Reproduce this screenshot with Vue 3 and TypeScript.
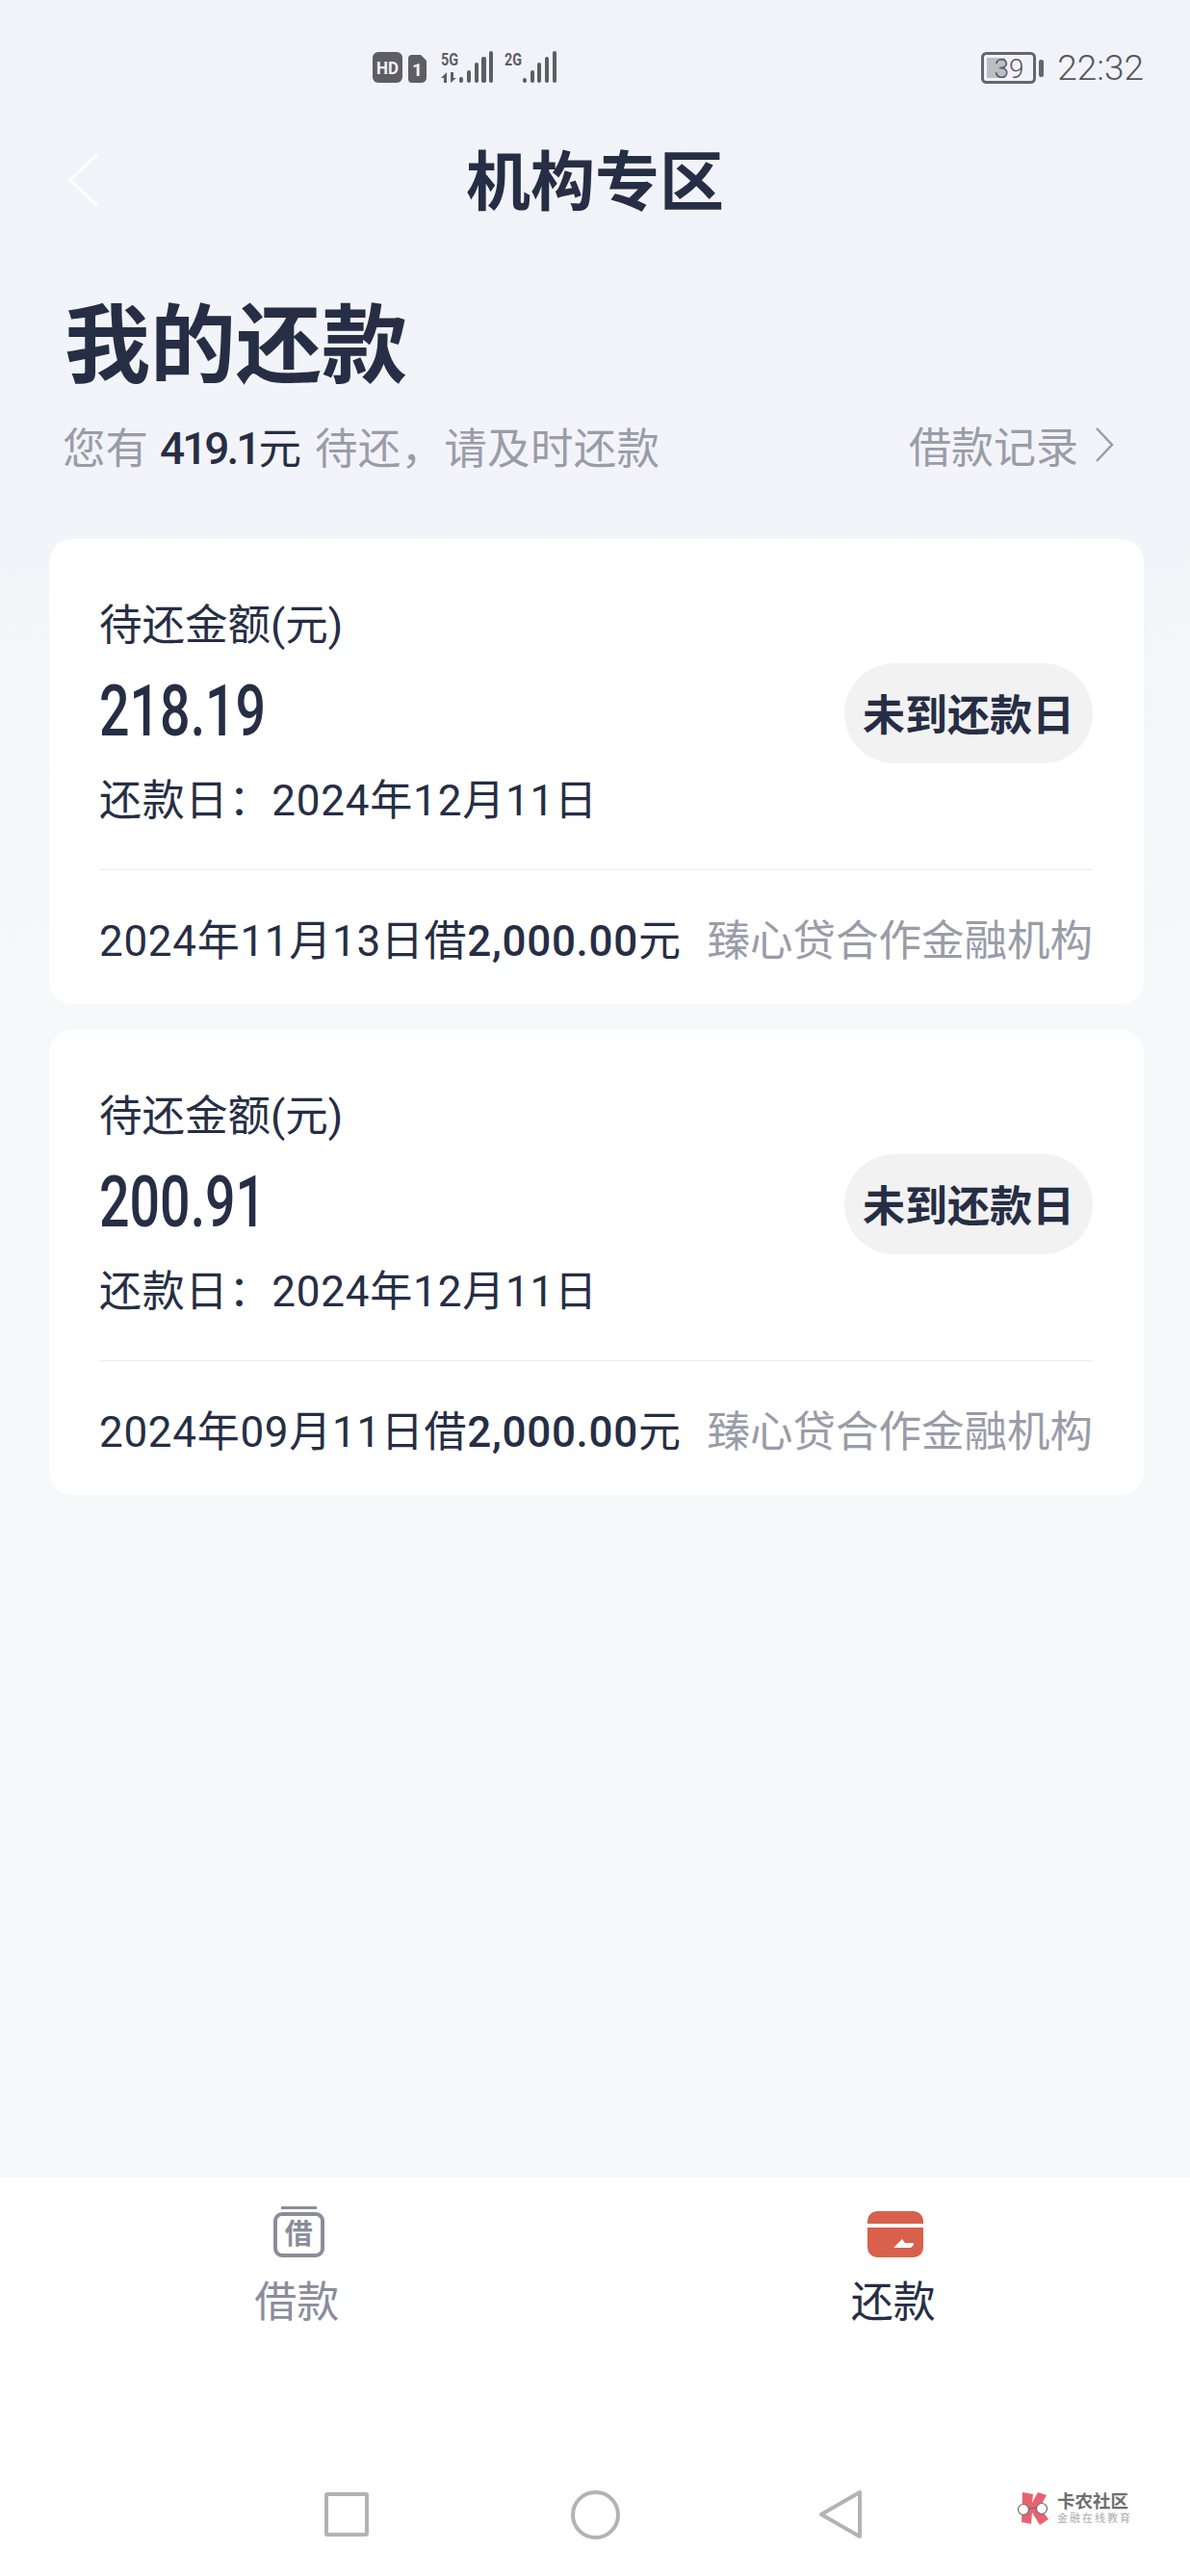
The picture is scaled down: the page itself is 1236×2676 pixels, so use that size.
<template>
  <div class="page">
    <div class="status-bar">
      <svg class="status-left" width="200" height="40" viewBox="0 0 200 40">
        <rect x="7" y="4" width="31" height="32" rx="6" fill="#5d5e63" />
        <text x="22.500" y="27" class="st-hd" text-anchor="middle" textLength="23" lengthAdjust="spacingAndGlyphs">HD</text>
        <path d="M48 7h9l6 6v18a5 5 0 0 1-5 5h-10a4 4 0 0 1-4-4v-21a4 4 0 0 1 4-4z" fill="#5d5e63" />
        <text x="53.500" y="29" class="st-hd" text-anchor="middle">1</text>
        <text x="87" y="18" class="st-g" text-anchor="middle" textLength="18" lengthAdjust="spacingAndGlyphs">5G</text>
        <path d="M84 25l-6 6h3v5h3zM88 25h3v6h3l-6 5z" fill="#5d5e63" />
        <g fill="#5d5e63">
          <rect x="97" y="30" width="4" height="6" rx="2" />
          <rect x="105" y="23" width="4" height="13" rx="2" />
          <rect x="113" y="15" width="4" height="21" rx="2" />
          <rect x="120" y="9" width="5" height="27" rx="2" />
          <rect x="128" y="3" width="4" height="33" rx="2" />
          <rect x="163" y="31" width="4" height="5" rx="2" />
          <rect x="171" y="23" width="4" height="13" rx="2" />
          <rect x="178" y="15" width="4" height="21" rx="2" />
          <rect x="186" y="9" width="4" height="27" rx="2" />
          <rect x="194" y="3" width="4" height="33" rx="2" />
        </g>
        <text x="153" y="18" class="st-g" text-anchor="middle" textLength="18" lengthAdjust="spacingAndGlyphs">2G</text>
      </svg>
      <div class="status-right">
        <svg width="66" height="36" viewBox="0 0 66 36">
          <rect x="1.500" y="2.500" width="54" height="30" rx="4" fill="none" stroke="#65676c" stroke-width="3" />
          <rect x="6" y="7" width="19" height="21" fill="#bdbec2" />
          <rect x="60" y="9" width="5" height="18" rx="2" fill="#65676c" />
          <text x="29" y="28" class="st-batt" text-anchor="middle">39</text>
        </svg>
        <span class="time">22:32</span>
      </div>
    </div>

    <div class="nav">
      <svg class="back" width="34" height="58" viewBox="0 0 34 58">
        <path d="M31 2L3 29l28 27" fill="none" stroke="#ffffff" stroke-width="3" />
      </svg>
      <div class="nav-title">机构专区</div>
    </div>

    <div class="head">
      <h1 class="head-title">我的还款</h1>
      <div class="head-sub">
        <div class="sub-left">
          <span>您有</span><b class="sub-num">419.1</b><b class="sub-unit">元</b><span class="sub-rest">待还&#xFF0C;请及时还款</span>
        </div>
        <div class="sub-right">
          借款记录
          <svg width="20" height="36" viewBox="0 0 20 36">
            <path d="M2 1l16 17L2 35" fill="none" stroke="#9a9ca8" stroke-width="2.500" />
          </svg>
        </div>
      </div>
    </div>

    <div class="cards">
      <div v-for="bill in bills" :key="bill.amount" class="card">
        <div class="card-main">
          <div class="card-info">
            <div class="label">待还金额(元)</div>
            <div class="amount"><span>{{ bill.amount }}</span></div>
            <div class="label due">还款日&#xFF1A;{{ bill.due }}</div>
          </div>
          <div class="pill">未到还款日</div>
        </div>
        <div class="card-foot">
          <div class="foot-left">{{ bill.borrowed }}借<b>2,000.00</b>元</div>
          <div class="foot-right">臻心贷合作金融机构</div>
        </div>
      </div>
    </div>

    <div class="bottom">
      <div class="tabs">
        <div class="tab">
          <div class="tab-icon">
            <span class="jar-lid"></span>
            <span class="jar">借</span>
          </div>
          <span class="tab-label">借款</span>
        </div>
        <div class="tab active">
          <div class="tab-icon">
            <svg width="58" height="48" viewBox="0 0 58 48">
              <path d="M10 0h38a10 10 0 0 1 10 10v3H0v-3A10 10 0 0 1 10 0zM0 17h58v21a10 10 0 0 1-10 10H10A10 10 0 0 1 0 38z" fill="#d9604c" />
              <path d="M27 38l7-7 2-2 3 4h9v2l-3 3z" fill="#ffffff" />
            </svg>
          </div>
          <span class="tab-label">还款</span>
        </div>
      </div>
      <div class="sys-nav">
        <span class="sys-square"></span>
        <span class="sys-circle"></span>
        <svg width="46" height="52" viewBox="0 0 46 52">
          <path d="M43 3v46L3 26z" fill="none" stroke="#b3b3b3" stroke-width="4" stroke-linejoin="round" />
        </svg>
      </div>
      <div class="watermark">
        <svg width="36" height="36" viewBox="0 0 36 36">
          <path d="M6 1l11 2-1 9 6-11 9 3-7 13 9 12-9 6-8-13-1 12-10-2z" fill="#e8636f" />
          <circle cx="7" cy="19" r="5.500" fill="#fff" stroke="#6b6b6b" stroke-width="1.200" />
          <circle cx="26" cy="18" r="5.500" fill="#fff" stroke="#6b6b6b" stroke-width="1.200" />
          <path d="M12 18l9-1" stroke="#6b6b6b" stroke-width="1.200" />
        </svg>
        <div class="wm-text">
          <div class="wm-name">卡农社区</div>
          <div class="wm-sub">金融在线教育</div>
        </div>
      </div>
    </div>
  </div>
</template>

<script setup lang="ts">
interface Bill {
  amount: string
  due: string
  borrowed: string
}

const bills: Bill[] = [
  { amount: '218.19', due: '2024年12月11日', borrowed: '2024年11月13日' },
  { amount: '200.91', due: '2024年12月11日', borrowed: '2024年09月11日' }
]
</script>

<style>
html,
body {
  margin: 0;
  background: #f6f7fa;
}
</style>

<style scoped>
.page {
  position: relative;
  width: 1236px;
  height: 2676px;
  display: flex;
  flex-direction: column;
  overflow: hidden;
  background: linear-gradient(#f2f3f9, #f3f4f9 520px, #f7f8fa 1000px);
  font-family: Roboto, "Noto Sans CJK SC", sans-serif;
  color: #262e45;
}

.status-bar {
  height: 133px;
  flex: none;
  box-sizing: border-box;
  padding: 50px 48px 0 380px;
  display: flex;
  justify-content: space-between;
  align-items: flex-start;
}

.st-hd {
  font: 700 19px Roboto, sans-serif;
  fill: #f2f3f9;
}

.st-g {
  font: 700 18px Roboto, sans-serif;
  fill: #5d5e63;
}

.st-batt {
  font: 300 28px Roboto, sans-serif;
  fill: #55575c;
}

.status-right {
  display: flex;
  align-items: center;
  gap: 13px;
  margin-top: 1px;
}

.time {
  font-size: 37px;
  line-height: 40px;
  font-weight: 300;
  color: #55575c;
}

.nav {
  position: relative;
  height: 114px;
  flex: none;
  display: flex;
  align-items: center;
  justify-content: center;
}

.back {
  position: absolute;
  left: 70px;
  top: 25px;
}

.nav-title {
  font-size: 67px;
  line-height: 114px;
  font-weight: 700;
}

.head {
  flex: none;
  padding: 0 48px 0 65px;
}

.head-title {
  margin: 58px 0 0 2px;
  font-size: 89px;
  line-height: 110px;
  font-weight: 700;
}

.head-sub {
  margin-top: 17px;
  display: flex;
  justify-content: space-between;
  align-items: center;
  height: 60px;
  font-size: 44.500px;
  color: #9a9ca8;
}

.sub-num {
  margin-left: 12px;
  font-weight: 500;
  font-size: 46px;
  letter-spacing: -3px;
  color: #262e45;
}

.sub-unit {
  font-weight: 400;
  color: #262e45;
}

.sub-rest {
  margin-left: 14px;
  letter-spacing: 0.300px;
}

.sub-right {
  display: flex;
  align-items: center;
  gap: 17px;
  margin-right: 31px;
  font-size: 44px;
}

.cards {
  flex: none;
  margin: 68px 48px 0 51px;
  display: flex;
  flex-direction: column;
  gap: 27px;
}

.card {
  height: 483px;
  box-sizing: border-box;
  padding: 0 53px 0 52px;
  background: #fff;
  border-radius: 24px;
}

.card-main {
  height: 344px;
  box-sizing: border-box;
  display: flex;
  justify-content: space-between;
  align-items: flex-start;
  border-bottom: 1px solid #eceded;
}

.card-info {
  padding-top: 60px;
}

.label {
  font-size: 44.500px;
  line-height: 60px;
  color: #262e45;
}

.amount {
  height: 98px;
  margin-top: 13px;
  line-height: 92px;
  font-size: 74px;
  font-weight: 500;
}

.amount span {
  display: inline-block;
  transform: scaleX(0.75);
  transform-origin: left center;
}

.due {
  margin-top: 11px;
  font-size: 44px;
  letter-spacing: 0.800px;
}

.pill {
  width: 258px;
  height: 104px;
  margin-top: 129px;
  border-radius: 52px;
  background: #f2f2f2;
  font-size: 44px;
  font-weight: 700;
  line-height: 110px;
  text-align: center;
}

.card-foot {
  height: 139px;
  display: flex;
  justify-content: space-between;
  align-items: center;
  font-size: 44px;
}

.foot-left {
  letter-spacing: 0.700px;
}

.foot-left b {
  font-weight: 500;
}

.foot-right {
  font-size: 44.500px;
  color: #9a9ca8;
}

.bottom {
  margin-top: auto;
  height: 414px;
  flex: none;
  display: flex;
  flex-direction: column;
  background: #fff;
}

.tabs {
  height: 322px;
  display: flex;
  align-items: flex-start;
}

.tab {
  flex: 1;
  padding-top: 27px;
  display: flex;
  flex-direction: column;
  align-items: center;
  color: #8b8d9b;
}

.tab.active {
  color: #262e45;
  padding-left: 3px;
}

.tab-icon {
  height: 56px;
  margin-left: 4px;
  display: flex;
  flex-direction: column;
  align-items: center;
  justify-content: flex-end;
  padding-bottom: 2px;
}

.jar-lid {
  width: 37px;
  height: 3px;
  margin-bottom: 3px;
  background: #8b8d9b;
}

.jar {
  width: 53px;
  height: 47px;
  box-sizing: border-box;
  border: 4px solid #8b8d9b;
  border-radius: 9px;
  font-size: 29px;
  font-weight: 700;
  line-height: 39px;
  text-align: center;
}

.tab-label {
  margin-top: 15px;
  font-size: 44px;
  line-height: 60px;
}

.sys-nav {
  padding-top: 2px;
  display: flex;
  align-items: center;
  height: 52px;
  margin-left: 337px;
  gap: 208px;
}

.sys-square {
  width: 46px;
  height: 46px;
  box-sizing: border-box;
  border: 4px solid #b3b3b3;
  border-radius: 3px;
}

.sys-circle {
  width: 51px;
  height: 51px;
  margin-left: 2px;
  margin-right: -2px;
  box-sizing: border-box;
  border: 4px solid #b3b3b3;
  border-radius: 50%;
}

.watermark {
  position: absolute;
  left: 1056px;
  top: 2588px;
  display: flex;
  gap: 6px;
}

.wm-text {
  display: flex;
  flex-direction: column;
}

.wm-name {
  font-size: 18.500px;
  line-height: 22px;
  font-weight: 700;
  color: #6e6e6e;
  white-space: nowrap;
}

.wm-sub {
  font-size: 11px;
  line-height: 13px;
  letter-spacing: 2px;
  color: #aaaaaa;
  white-space: nowrap;
}
</style>
